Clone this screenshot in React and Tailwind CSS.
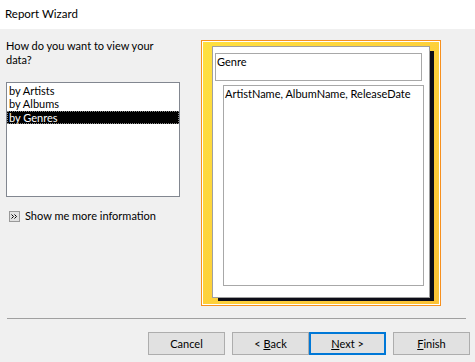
export default function App() {
  const font = { fontFamily: 'Lato, "Segoe UI", sans-serif' };
  return (
    <div className="w-[475px] h-[362px] bg-[#f0f0f0] flex flex-col text-[11px] text-black overflow-hidden" style={font}>
      <div className="h-[29px] bg-white flex items-center pl-[5px] pb-[1px] shrink-0 text-[11.5px]">Report Wizard</div>
      <div className="flex h-[289px] shrink-0">
        <div className="w-[201px] pl-[6px] pt-[10px] flex flex-col">
          <div className="leading-[14px] w-[165px]">How do you want to view your data?</div>
          <div className="mt-[15px] w-[174px] h-[115px] border border-[#828790] bg-white pt-[1px] leading-[13px]">
            <div className="h-[13px] px-[2px]">by Artists</div>
            <div className="h-[13px] px-[2px]">by Albums</div>
            <div className="h-[13px] px-[2px] mt-[1px] bg-black text-white outline outline-1 outline-dotted outline-offset-[-1px] outline-[#888]">by Genres</div>
          </div>
          <div className="mt-[11px] flex items-center pl-[3px]">
            <div className="w-[11px] h-[11px] border border-[#999] bg-[#e1e1e1] flex items-center justify-center">
              <svg width="7" height="5" viewBox="0 0 7 5" fill="none" stroke="#000" strokeWidth="1">
                <path d="M0.5 0.5 L2.5 2.5 L0.5 4.5 M3.5 0.5 L5.5 2.5 L3.5 4.5" />
              </svg>
            </div>
            <span className="ml-[5px]">Show me more information</span>
          </div>
        </div>
        <div className="pt-[11px]">
          <div className="w-[240px] h-[266px] border border-[#f7901e]">
            <div className="w-full h-full border border-white bg-gradient-to-br from-[#ffe040] to-[#fbc235] pl-[9px] pt-[4px]">
              <div className="w-[218px] h-[252px] bg-white border border-[#a0a0a0] shadow-[5px_4px_0_-1px_#0d0d18] pl-[2px] pt-[6px]">
                <div className="w-[207px] h-[28px] border border-[#a8a8a8] pl-[1px] leading-[14px] pt-[1px]">Genre</div>
                <div className="ml-[8px] mt-[4px] w-[201px] h-[201px] border border-[#a8a8a8] pl-[1px] pt-[1px] leading-[14px] whitespace-nowrap">ArtistName, AlbumName, ReleaseDate</div>
              </div>
            </div>
          </div>
        </div>
      </div>
      <div className="mx-[7px] w-[459px] h-px bg-[#a0a0a0]" />
      <div className="flex pt-[13px] pl-[148px]">
        <button className="w-[77px] h-[23px] border border-[#adadad] bg-[#e1e1e1] leading-none">Cancel</button>
        <button className="ml-[7px] w-[77px] h-[23px] border border-[#adadad] bg-[#e1e1e1] leading-none">&lt; <span className="underline">B</span>ack</button>
        <button className="ml-[0px] w-[77px] h-[23px] border-2 border-[#0078d7] bg-[#e1e1e1] leading-none"><span className="underline">N</span>ext &gt;</button>
        <button className="ml-[7px] w-[77px] h-[23px] border border-[#adadad] bg-[#e1e1e1] leading-none"><span className="underline">F</span>inish</button>
      </div>
    </div>
  );
}
